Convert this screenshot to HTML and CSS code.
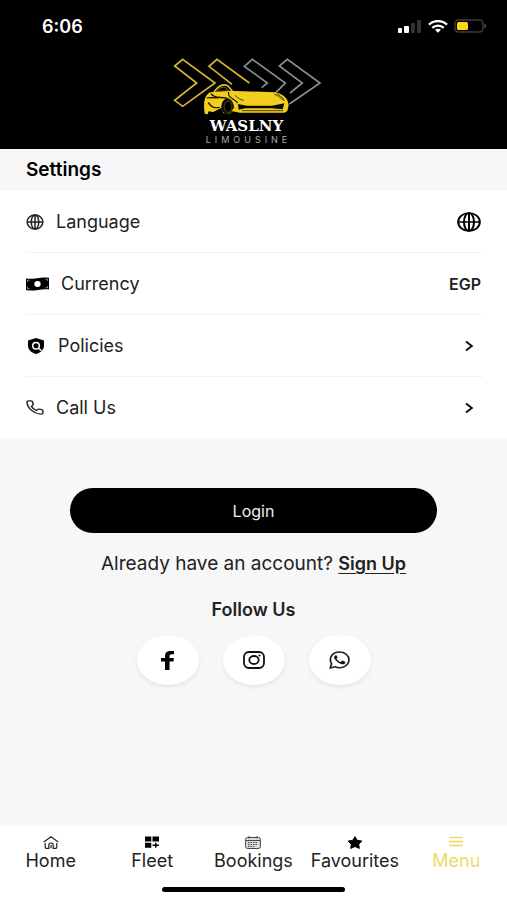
FILE: index.html
```html
<!DOCTYPE html>
<html lang="en">
<head>
    <meta charset="UTF-8">
    <meta name="viewport" content="width=device-width, initial-scale=1.0">
    <title>Waslny Limousine</title>
    <link rel="stylesheet" href="styles.css">
</head>
<body>

    <header class="top">
        <!-- status bar -->
        <div class="status-bar">
            <span class="time">6:06</span>
            <div class="status-icons">
                <svg width="24" height="13" viewBox="0 0 24 13">
                    <rect x="0" y="8" width="4" height="5" rx="1" fill="#fff"/>
                    <rect x="6" y="6" width="5" height="7" rx="1" fill="#fff"/>
                    <rect x="13" y="3" width="4" height="10" rx="1" fill="#333"/>
                    <rect x="19" y="0" width="4" height="13" rx="1" fill="#333"/>
                </svg>
                <svg width="20" height="13" viewBox="0 0 20 13" fill="none" stroke="#fff" stroke-width="2.3">
                    <path d="M1 4.6C6-.2 14-.2 19 4.6"/>
                    <path d="M4.3 7.9c3.2-3 8.2-3 11.4 0"/>
                    <path d="M7 9.800c1.800-1.500 4.200-1.500 6 0L10 12.800z" fill="#fff" stroke="none"/>
                </svg>
                <svg width="33" height="14" viewBox="0 0 33 14">
                    <rect x="1" y="1" width="28" height="12" rx="3.500" fill="none" stroke="#3d3d3d" stroke-width="1.500"/>
                    <rect x="3" y="3" width="11" height="8" rx="1.500" fill="#fbd90b"/>
                    <path d="M30.500 5c2.200.5 2.200 3.500 0 4z" fill="#555"/>
                </svg>
            </div>
        </div>

        <!-- logo -->
        <div class="logo">
            <svg width="150" height="60" viewBox="36 22 450 180" fill="none">
                <g stroke-width="5">
                    <path d="M68 29L165 100 68 170 44 152 110 100 44 49z" stroke="#d8b632"/>
                    <path d="M216 104L147 50 171 29 268 100" stroke="#d8b632"/>
                    <path d="M305 114L322 100 253 50 277 29 376 100 348 128" stroke="#8d8d90"/>
                    <path d="M388 163L480 100 382 29 358 49 427 100 390 130" stroke="#8d8d90"/>
                </g>
                <path d="M134 192C129 158 134 135 151 128L208 123 345 128C370 132 384 147 386 167L382 184 373 189 240 189 218 185 207 194 190 190 184 174 160 187 146 185 143 194z" fill="#f4ce1c"/>
                <path d="M162 127C175 108 190 102 203 108L217 124" stroke="#e2bd25" stroke-width="5"/>
                <path d="M170 125c8-11 19-15 27-11l9 10z" fill="#000" stroke="#b99818" stroke-width="2"/>
                <ellipse cx="202" cy="170" rx="18" ry="23" fill="#000"/>
                <ellipse cx="204" cy="171" rx="12" ry="17" stroke="#66551a" stroke-width="3"/>
                <path d="M140 145c10-4 21 3 38-2M145 158c10 18 22 17 34 15M153 132c8 14 27 10 44 13 16 4 22 12 24 31M206 127c-5 17 16 19 27 33" stroke="#221c05" stroke-width="4"/>
                <path d="M234 163l26 5h76l37-7-5 18-34-3h-78l-20 4z" fill="#080704"/>
                <path d="M225 137c9 10 20 14 26 15M343 134c13 2 17 14 31 19M350 131l22 17M246 183h124" stroke="#4b3e08" stroke-width="3"/>
            </svg>
            <span class="logo-name">WASLNY</span>
            <span class="logo-sub">LIMOUSINE</span>
        </div>
    </header>

    <main>
        <h1>Settings</h1>

        <ul class="settings">
            <li>
                <button class="row">
                    <svg class="icon" width="18" height="16" viewBox="0 0 24 24" preserveAspectRatio="none" fill="none" stroke="#222" stroke-width="2">
                        <circle cx="12" cy="12" r="10.500"/>
                        <ellipse cx="12" cy="12" rx="5" ry="10.500"/>
                        <path d="M2 12h20M12 2v20"/>
                    </svg>
                    <span>Language</span>
                    <svg class="end" width="24" height="20" viewBox="0 0 24 24" preserveAspectRatio="none" fill="none" stroke="#000" stroke-width="2">
                        <circle cx="12" cy="12" r="10.800"/>
                        <ellipse cx="12" cy="12" rx="5" ry="10.800"/>
                        <path d="M1 12h22M12 1v22"/>
                    </svg>
                </button>
            </li>
            <li>
                <button class="row">
                    <svg class="icon" width="23" height="14" viewBox="0 0 23 14">
                        <path d="M0 1.500C8 3 14-.8 23 .8V12.500C15 11 9 14.800 0 13z" fill="#000"/>
                        <ellipse cx="11.500" cy="7" rx="3.200" ry="3" fill="#fff"/>
                        <path d="M1.500 5V3.300h2M19.500 2.200h2V4M1.500 9.700v2h2M19.500 10.800h2V9" fill="none" stroke="#aaa" stroke-width=".8"/>
                    </svg>
                    <span>Currency</span>
                    <b class="end">EGP</b>
                </button>
            </li>
            <li>
                <button class="row">
                    <svg class="icon" width="20" height="16" viewBox="0 0 20 16">
                        <path d="M10 0l8 2.500v5C18 11.800 14.500 15 10 16 5.500 15 2 11.800 2 7.500v-5z" fill="#000"/>
                        <circle cx="10" cy="7.700" r="3.300" fill="none" stroke="#fff" stroke-width="1.500"/>
                        <path d="M12 9.700l3.500 3" stroke="#fff" stroke-width="1.500"/>
                    </svg>
                    <span>Policies</span>
                    <svg class="end arrow" width="24" height="12" viewBox="0 0 24 12" fill="none" stroke="#111" stroke-width="2">
                        <path d="M9 1.500L14.800 6 9 10.500"/>
                    </svg>
                </button>
            </li>
            <li>
                <button class="row">
                    <svg class="icon" width="18" height="15" viewBox="0 0 24 24" preserveAspectRatio="none" fill="none" stroke="#222" stroke-width="2" stroke-linejoin="round">
                        <path d="M22.500 17.500v3.200a2 2 0 0 1-2.200 2C10.500 22 2 13.500 1.300 3.500a2 2 0 0 1 2-2.200h3.400a2 2 0 0 1 2 1.700l.8 3.500a2 2 0 0 1-.6 2L7.200 10.200c1.500 2.900 3.700 5.100 6.600 6.600l1.700-1.700a2 2 0 0 1 2-.6l3.400.9a2 2 0 0 1 1.600 2.100z"/>
                    </svg>
                    <span>Call Us</span>
                    <svg class="end arrow" width="24" height="12" viewBox="0 0 24 12" fill="none" stroke="#111" stroke-width="2">
                        <path d="M9 1.500L14.800 6 9 10.500"/>
                    </svg>
                </button>
            </li>
        </ul>

        <div class="account">
            <button class="login-btn">Login</button>
            <p class="signup">Already have an account? <a href="#">Sign Up</a></p>

            <h2>Follow Us</h2>
            <div class="social">
                <a href="#" aria-label="Facebook">
                    <svg width="14" height="19" viewBox="0 0 14 19">
                        <path d="M4 19v-8.500H0V7h4V5C4 1.700 6 0 9.400 0H13v3.300h-2.200C9.300 3.300 8.500 4 8.500 5.200V7H13l-.6 3.500H8.500V19z" fill="#000"/>
                    </svg>
                </a>
                <a href="#" aria-label="Instagram">
                    <svg width="22" height="18" viewBox="0 0 22 18" fill="none" stroke="#111" stroke-width="1.800">
                        <rect x="1" y="1" width="20" height="16" rx="5"/>
                        <ellipse cx="11" cy="9" rx="4.700" ry="4"/>
                        <circle cx="16.500" cy="4.500" r="1.100" fill="#111" stroke="none"/>
                    </svg>
                </a>
                <a href="#" aria-label="WhatsApp">
                    <svg width="21" height="18" viewBox="0 0 24 24" preserveAspectRatio="none">
                        <path d="M1.500 22.500L3 17C-1 9.500 4 1.200 12 1.200c6 0 10.800 4.600 10.800 10.500C22.800 20 14 24.500 7 21z" fill="none" stroke="#222" stroke-width="2"/>
                        <path d="M8.700 6.200c-.4-.8-1.200-.7-1.900 0-1.400 1.400-1 3.500.2 5.200 2 3 4.500 5.400 7.900 6.100 1.900.4 3.500-.6 3.800-2.300.1-.5 0-.8-.4-1l-2.700-1.300c-.4-.2-.7-.1-1 .3l-1 1.200c-.3.300-.5.300-.9.100-1.900-.9-3.100-2.200-4-3.800-.2-.4 0-.6.200-.9.700-.8.900-1.200.7-1.600z" fill="#111"/>
                    </svg>
                </a>
            </div>
        </div>
    </main>

    <nav class="bottom-nav">
        <div class="tabs">
            <a href="#">
                <svg width="16" height="13" viewBox="0 0 16 13" fill="none" stroke="#222" stroke-width="1.200">
                    <path d="M.8 6L8 .8 15.200 6M2.200 7v4.300q0 1 1 1h2.600V9.200a2.200 2.200 0 0 1 4.400 0v3.100h2.600q1 0 1-1V7M8 9v3.300"/>
                </svg>
                Home
            </a>
            <a href="#">
                <svg width="14" height="12" viewBox="0 0 14 12" fill="#000">
                    <path d="M0 .5h6.300v5H0zM7.500.5H14v5H7.500zM0 6.700h6.300v5H0zM10 6.700h1.500v1.800H14v1.400h-2.500v1.800H10V9.900H7.500V8.500H10z"/>
                </svg>
                Fleet
            </a>
            <a href="#">
                <svg width="16" height="13" viewBox="0 0 16 13" fill="none" stroke="#444">
                    <rect x=".6" y="1.500" width="14.800" height="11" rx="2" fill="#ddd"/>
                    <path d="M1 4.500h14M4 0v2.500M12 0v2.500"/>
                    <path d="M3 6.500h10M3 8.500h10M3 10.500h7" stroke-dasharray="1.500 1"/>
                </svg>
                Bookings
            </a>
            <a href="#">
                <svg width="16" height="13" viewBox="0 0 16 13">
                    <path d="M8 .7l2.200 3.600 4.700.8-3.200 3.200.6 4.100L8 10.500l-4.300 1.900.6-4.100L1.100 5.100l4.700-.8z" fill="#000" stroke="#000" stroke-linejoin="round"/>
                </svg>
                Favourites
            </a>
            <a href="#" class="active">
                <svg width="14" height="11" viewBox="0 0 14 11" stroke="#eddb66" stroke-width="1.400">
                    <path d="M0 1.500h14M0 5.500h14M0 9.500h14"/>
                </svg>
                Menu
            </a>
        </div>
        <div class="home-bar"></div>
    </nav>

</body>
</html>
```
FILE: styles.css
```css
* {
    box-sizing: border-box;
}

body {
    font-family: Inter, "Open Sans", sans-serif;
    margin: 0;
    min-height: 100vh;
    display: flex;
    flex-direction: column;
    background: #f7f7f7;
    color: #222;
}

svg {
    display: block;
    flex-shrink: 0;
}

a {
    color: inherit;
}

.top {
    background: #000;
    color: #fff;
    padding-bottom: 5px;
}

.status-bar {
    display: flex;
    justify-content: space-between;
    align-items: center;
    height: 52px;
    padding: 0 20px 0 42px;
}

.time {
    font-size: 18px;
    font-weight: 600;
}

.status-icons {
    display: flex;
    align-items: center;
    gap: 6px;
}

.logo {
    display: flex;
    flex-direction: column;
    align-items: center;
    padding: 5px 14px 0 0;
}

.logo-name {
    font-family: "DejaVu Serif", serif;
    font-size: 15px;
    font-weight: bold;
    line-height: 18px;
}

.logo-sub {
    font-size: 9px;
    line-height: 9px;
    letter-spacing: 4px;
    padding-left: 4px;
    color: #aaa;
}

main {
    flex: 1;
}

h1 {
    font-size: 19px;
    font-weight: 600;
    line-height: 42px;
    margin: 0;
    padding: 0 26px;
    color: #000;
}

.settings {
    list-style: none;
    margin: 0;
    padding: 0 24px 0 26px;
    background: #fff;
}

.settings li + li {
    border-top: 1px solid #f3f3f3;
}

.row {
    display: flex;
    align-items: center;
    gap: 12px;
    width: 100%;
    height: 61px;
    padding: 0 2px 0 0;
    border: none;
    background: none;
    color: #222;
    font: inherit;
    font-size: 18px;
    cursor: pointer;
}

.end {
    margin-left: auto;
}

.row b {
    font-size: 16px;
    font-weight: 600;
}

.account {
    display: flex;
    flex-direction: column;
    align-items: center;
    padding: 50px 70px 0;
}

.login-btn {
    width: 100%;
    height: 45px;
    border: none;
    border-radius: 30px;
    background: #000;
    color: #eee;
    font: inherit;
    font-size: 16px;
    cursor: pointer;
}

.signup {
    margin: 20px 0 0;
    font-size: 19px;
    line-height: 22px;
    white-space: nowrap;
}

.signup a {
    font-size: 18px;
    font-weight: 600;
    text-underline-offset: 3px;
}

h2 {
    margin: 24px 0 14px;
    font-size: 18px;
    font-weight: 600;
    line-height: 22px;
}

.social {
    display: flex;
    gap: 24px;
}

.social a {
    display: flex;
    align-items: center;
    justify-content: center;
    width: 62px;
    height: 50px;
    border-radius: 50%;
    background: #fff;
    box-shadow: 0 2px 4px rgba(0, 0, 0, 0.08);
}

.bottom-nav {
    background: #fff;
    padding: 10px 0 8px;
}

.tabs {
    display: grid;
    grid-template-columns: repeat(5, 1fr);
}

.tabs a {
    display: flex;
    flex-direction: column;
    align-items: center;
    justify-content: space-between;
    height: 34px;
    font-size: 18px;
    line-height: 18px;
    text-decoration: none;
}

.tabs .active {
    color: #eddb66;
}

.home-bar {
    width: 36%;
    height: 5px;
    margin: 17px auto 0;
    border-radius: 3px;
    background: #000;
}
```
